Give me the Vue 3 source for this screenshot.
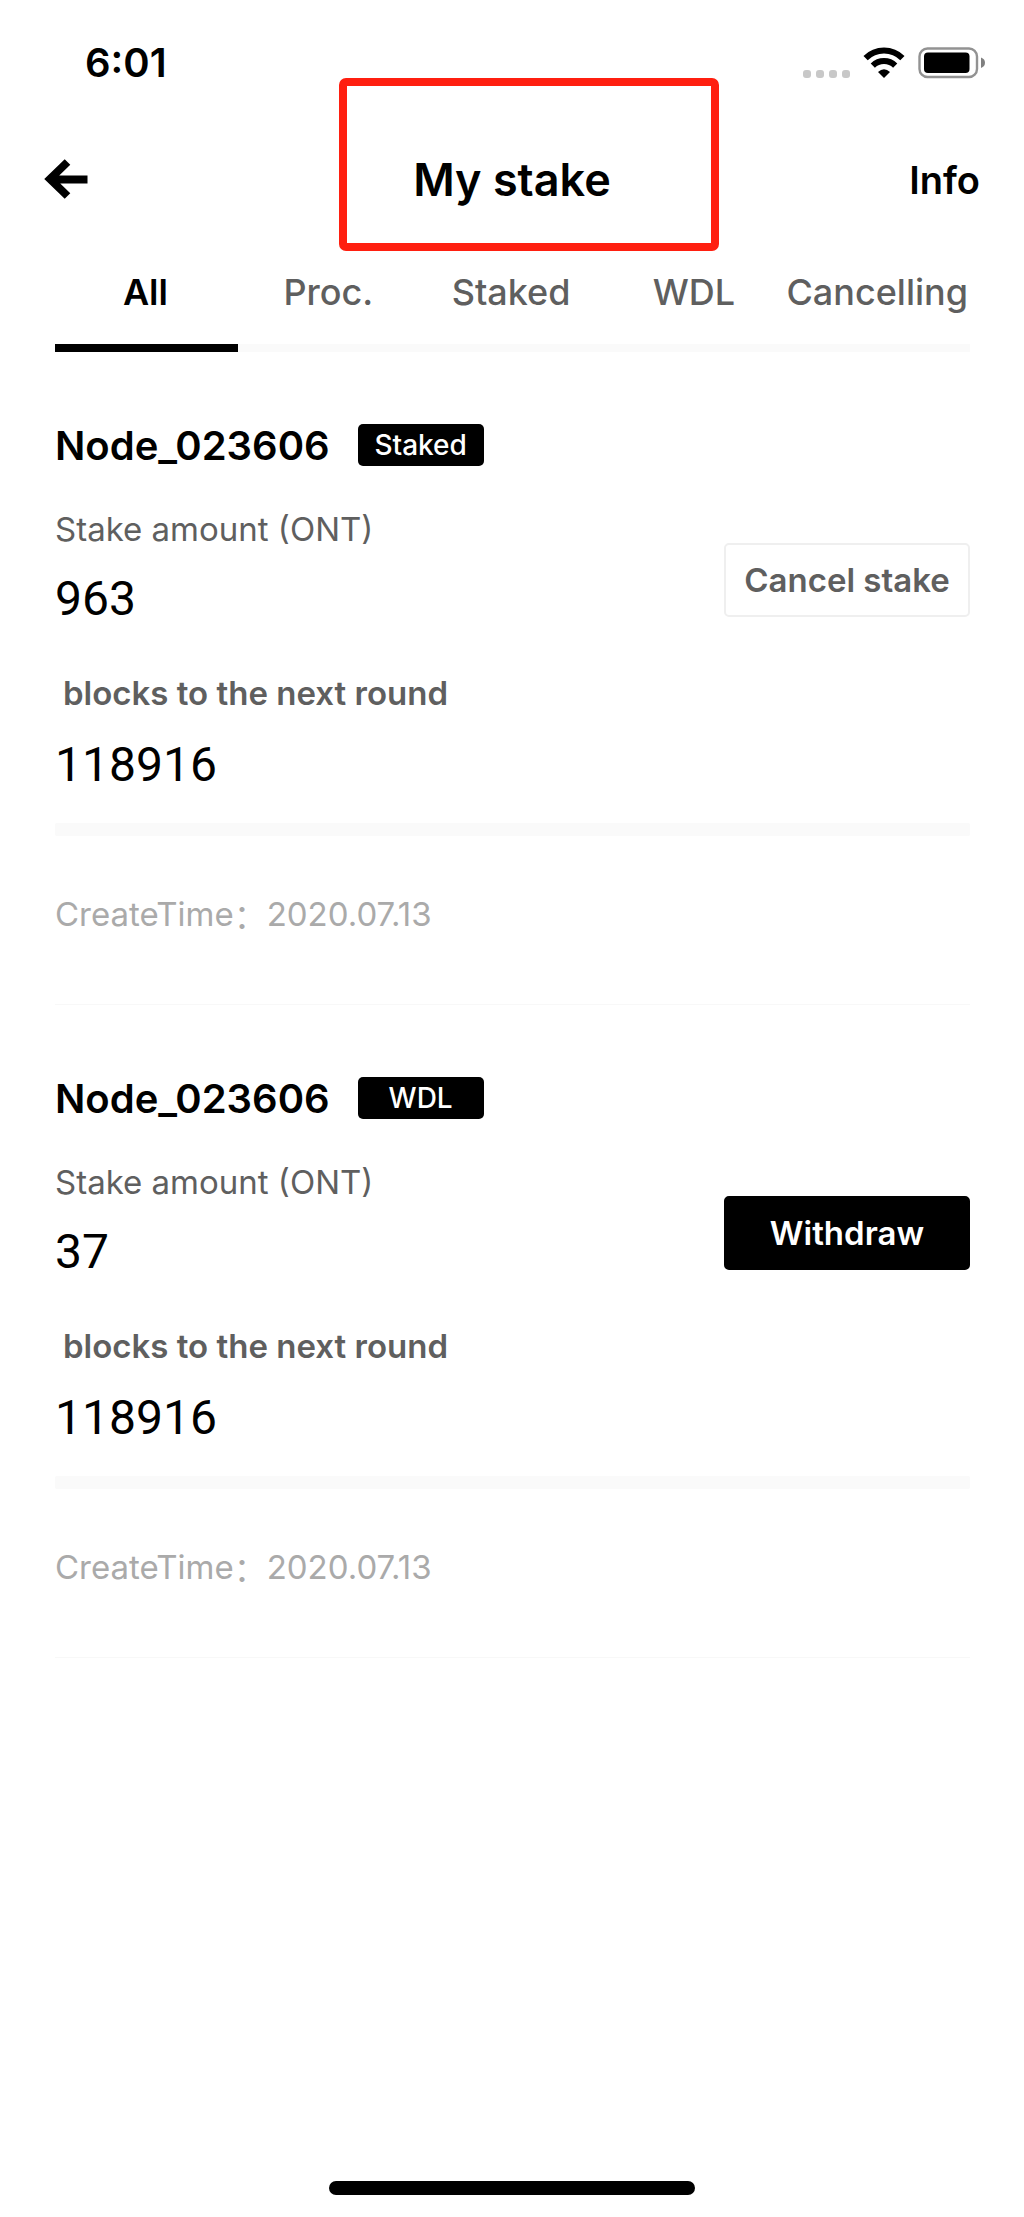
<script setup>
import { ref, computed } from 'vue'

const tabs = ['All', 'Proc.', 'Staked', 'WDL', 'Cancelling']
const activeTab = ref('All')

const stakes = [
  { id: 1, node: 'Node_023606', status: 'Staked', amount: 963, blocks: 118916, created: '2020.07.13', action: 'Cancel stake', primary: false },
  { id: 2, node: 'Node_023606', status: 'WDL', amount: 37, blocks: 118916, created: '2020.07.13', action: 'Withdraw', primary: true }
]

const visibleStakes = computed(() =>
  activeTab.value === 'All' ? stakes : stakes.filter((s) => s.status === activeTab.value)
)
</script>

<template>
  <div class="screen">
    <div class="status-bar">
      <span class="time">6:01</span>
      <div class="indicators">
        <span class="dots"><i v-for="n in 4" :key="n"></i></span>
        <svg class="wifi" width="42" height="32" viewBox="0 0 42 32" aria-hidden="true">
          <path d="M2.600 11.200A26 26 0 0 1 39.400 11.200" fill="none" stroke="#000" stroke-width="6" />
          <path d="M9.800 18.600A16 16 0 0 1 32.200 18.600" fill="none" stroke="#000" stroke-width="6" />
          <path d="M15 25Q21 19.400 27 25L21 31Z" fill="#000" />
        </svg>
        <svg class="battery" width="68" height="32" viewBox="0 0 68 32" aria-hidden="true">
          <rect x="1.500" y="1.500" width="57.500" height="28.500" rx="8" fill="none" stroke="#929292" stroke-width="2.400" />
          <rect x="6" y="5.500" width="45.500" height="20.500" rx="4" fill="#000" />
          <path d="M63 10.500Q67 12 67 15.800T63 21Z" fill="#808080" />
        </svg>
      </div>
    </div>

    <header class="nav">
      <button class="back" type="button" aria-label="Back">
        <svg width="44" height="42" viewBox="0 0 44 42" aria-hidden="true">
          <path d="M23.500 3L6 20L23.500 37M6 20.500H43.500" fill="none" stroke="#000" stroke-width="8" />
        </svg>
      </button>
      <h1 class="title">My stake</h1>
      <a class="info" href="#info">Info</a>
      <div class="highlight"></div>
    </header>

    <nav class="tabs">
      <button
        v-for="tab in tabs"
        :key="tab"
        type="button"
        class="tab"
        :class="{ active: tab === activeTab }"
        @click="activeTab = tab"
      >{{ tab }}</button>
    </nav>

    <main class="list">
      <article v-for="stake in visibleStakes" :key="stake.id" class="card">
        <div class="card-head">
          <h2 class="node">{{ stake.node }}</h2>
          <span class="badge">{{ stake.status }}</span>
        </div>
        <div class="amount-row">
          <div>
            <div class="label">Stake amount (ONT)</div>
            <div class="value">{{ stake.amount }}</div>
          </div>
          <button type="button" class="action" :class="{ primary: stake.primary }">{{ stake.action }}</button>
        </div>
        <div class="blocks">
          <div class="label strong">blocks to the next round</div>
          <div class="value">{{ stake.blocks }}</div>
        </div>
        <div class="progress"></div>
        <div class="created"><span>CreateTime</span><span class="colon">：</span><span>{{ stake.created }}</span></div>
      </article>
    </main>

    <div class="home-indicator"></div>
  </div>
</template>

<style>
body {
  background: #fff;
}
</style>

<style scoped>
.screen {
  display: flex;
  flex-direction: column;
  min-height: 100vh;
  box-sizing: border-box;
  padding-bottom: 22px;
  color: #000;
  font-family: Inter, "Noto Sans CJK SC", sans-serif;
}
button {
  margin: 0;
  padding: 0;
  border: 0;
  background: none;
  color: inherit;
  font: inherit;
  cursor: pointer;
}
h1,
h2 {
  margin: 0;
}
.status-bar {
  display: flex;
  align-items: center;
  justify-content: space-between;
  height: 125px;
  padding: 0 38px 0 85px;
}
.time {
  font-size: 40px;
  font-weight: 600;
}
.indicators {
  display: flex;
  align-items: center;
}
.dots {
  display: flex;
  gap: 5px;
  align-self: flex-end;
  margin: 0 13px 1px 0;
}
.dots i {
  width: 8px;
  height: 8px;
  border-radius: 3px;
  background: #c8c8c8;
}
.wifi {
  margin-right: 13px;
}
.nav {
  position: relative;
  display: grid;
  grid-template-columns: 1fr auto 1fr;
  align-items: center;
  height: 109px;
  padding: 0 44px 2px;
}
.back {
  justify-self: start;
  display: flex;
}
.title {
  font-size: 45px;
  font-weight: 600;
  line-height: 56px;
}
.info {
  justify-self: end;
  color: #000;
  font-size: 38px;
  font-weight: 600;
  text-decoration: none;
}
.highlight {
  position: absolute;
  top: -47px;
  left: calc(50% - 173px);
  width: 380px;
  height: 173px;
  box-sizing: border-box;
  border: 8px solid #ff1f10;
  border-radius: 7px;
  pointer-events: none;
}
.tabs {
  display: grid;
  grid-template-columns: repeat(5, 1fr);
  margin: 0 54px 0 55px;
}
.tab {
  height: 116px;
  padding: 4px 2px 0 0;
  border-bottom: 8px solid #fafafa;
  color: #5f5f5f;
  font-size: 36px;
  font-weight: 500;
  white-space: nowrap;
}
.tab.active {
  border-color: #000;
  color: #000;
  font-weight: 600;
}
.list {
  padding: 0 54px 0 55px;
}
.card {
  padding: 72px 0 70px;
  border-bottom: 1px solid #f8f8f8;
}
.card-head {
  display: flex;
  align-items: center;
  gap: 28px;
  height: 42px;
}
.node {
  font-size: 40px;
  font-weight: 600;
}
.badge {
  min-width: 126px;
  box-sizing: border-box;
  border-radius: 5px;
  background: #000;
  color: #fff;
  font-size: 28px;
  font-weight: 500;
  line-height: 42px;
  text-align: center;
}
.amount-row {
  display: flex;
  align-items: flex-end;
  justify-content: space-between;
  margin-top: 43px;
}
.label {
  color: #5f5f5f;
  font-size: 33px;
  line-height: 40px;
}
.label.strong {
  padding-left: 8px;
  font-weight: 600;
}
.value {
  margin-top: 22px;
  font-family: Roboto, sans-serif;
  font-size: 48px;
  line-height: 56px;
}
.action {
  width: 246px;
  height: 74px;
  margin-bottom: 10px;
  box-sizing: border-box;
  border: 2px solid #efefef;
  border-radius: 5px;
  color: #5f5f5f;
  font-size: 33px;
  font-weight: 600;
}
.action.primary {
  border-color: #000;
  background: #000;
  color: #fff;
}
.blocks {
  margin-top: 46px;
}
.blocks .value {
  margin-top: 24px;
}
.progress {
  height: 13px;
  margin-top: 30px;
  border-radius: 2px;
  background: #fafafa;
}
.created {
  display: flex;
  margin-top: 58px;
  color: #aaa;
  font-size: 33px;
  font-weight: 400;
  line-height: 40px;
}
.colon {
  font-family: "Noto Sans CJK SC", sans-serif;
}
.home-indicator {
  width: 366px;
  height: 14px;
  margin: auto auto 0;
  border-radius: 7px;
  background: #000;
}
</style>
